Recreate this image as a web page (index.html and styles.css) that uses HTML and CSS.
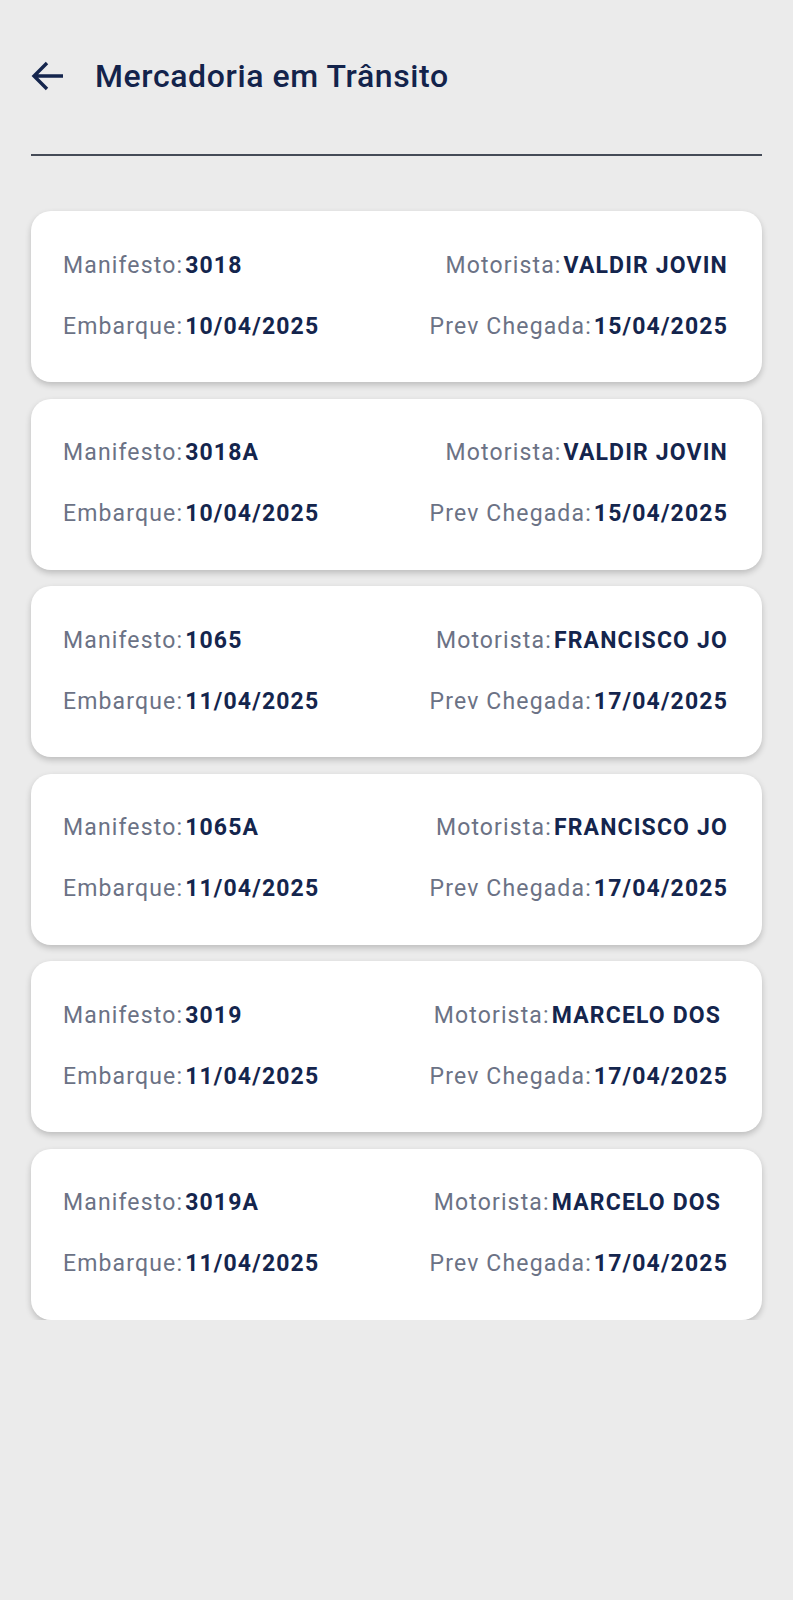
FILE: index.html
```html
<!DOCTYPE html>
<html lang="pt-BR">
<head>
<meta charset="utf-8">
<title>Mercadoria em Trânsito</title>
<link rel="stylesheet" href="styles.css">
</head>
<body>
<div class="app">
  <header class="header">
    <svg class="back" width="32" height="30" viewBox="0 0 32 30" aria-hidden="true">
      <path d="M32 15 H3 M16 2 L3 15 L16 28" fill="none" stroke="#14254d" stroke-width="3.4" stroke-linejoin="miter"/>
    </svg>
    <h1 class="title">Mercadoria em Trânsito</h1>
  </header>
  <div class="divider"></div>
  <main class="list">
    <section class="card">
      <div class="row"><span class="label">Manifesto:</span><span class="value">3018</span></div>
      <div class="row right"><span class="label">Motorista:</span><span class="value">VALDIR JOVIN</span></div>
      <div class="row"><span class="label">Embarque:</span><span class="value">10/04/2025</span></div>
      <div class="row right"><span class="label">Prev Chegada:</span><span class="value">15/04/2025</span></div>
    </section>
    <section class="card">
      <div class="row"><span class="label">Manifesto:</span><span class="value">3018A</span></div>
      <div class="row right"><span class="label">Motorista:</span><span class="value">VALDIR JOVIN</span></div>
      <div class="row"><span class="label">Embarque:</span><span class="value">10/04/2025</span></div>
      <div class="row right"><span class="label">Prev Chegada:</span><span class="value">15/04/2025</span></div>
    </section>
    <section class="card">
      <div class="row"><span class="label">Manifesto:</span><span class="value">1065</span></div>
      <div class="row right"><span class="label">Motorista:</span><span class="value">FRANCISCO JO</span></div>
      <div class="row"><span class="label">Embarque:</span><span class="value">11/04/2025</span></div>
      <div class="row right"><span class="label">Prev Chegada:</span><span class="value">17/04/2025</span></div>
    </section>
    <section class="card">
      <div class="row"><span class="label">Manifesto:</span><span class="value">1065A</span></div>
      <div class="row right"><span class="label">Motorista:</span><span class="value">FRANCISCO JO</span></div>
      <div class="row"><span class="label">Embarque:</span><span class="value">11/04/2025</span></div>
      <div class="row right"><span class="label">Prev Chegada:</span><span class="value">17/04/2025</span></div>
    </section>
    <section class="card">
      <div class="row"><span class="label">Manifesto:</span><span class="value">3019</span></div>
      <div class="row right"><span class="label">Motorista:</span><span class="value">MARCELO DOS&nbsp;</span></div>
      <div class="row"><span class="label">Embarque:</span><span class="value">11/04/2025</span></div>
      <div class="row right"><span class="label">Prev Chegada:</span><span class="value">17/04/2025</span></div>
    </section>
    <section class="card">
      <div class="row"><span class="label">Manifesto:</span><span class="value">3019A</span></div>
      <div class="row right"><span class="label">Motorista:</span><span class="value">MARCELO DOS&nbsp;</span></div>
      <div class="row"><span class="label">Embarque:</span><span class="value">11/04/2025</span></div>
      <div class="row right"><span class="label">Prev Chegada:</span><span class="value">17/04/2025</span></div>
    </section>
  </main>
</div>
</body>
</html>
```

FILE: styles.css
```css
html, body {
  margin: 0;
  padding: 0;
  background: #ebebeb;
}

body {
  font-family: Roboto, "Liberation Sans", sans-serif;
  color: #14254d;
}

.app {
  padding: 0 31px;
}

.header {
  display: flex;
  align-items: center;
  gap: 32px;
  padding-top: 56px;
  height: 40px;
}

.back {
  display: block;
  flex: none;
}

.title {
  margin: 0;
  font-size: 32px;
  font-weight: 500;
  line-height: 40px;
  letter-spacing: 0.6px;
  color: #13234b;
}

.divider {
  margin-top: 58px;
  height: 2px;
  background: #454b57;
}

.list {
  display: flex;
  flex-direction: column;
  gap: 16.5px;
  margin-top: 55px;
}

.card {
  background: #ffffff;
  border-radius: 20px;
  box-shadow: 0 3px 6px rgba(0, 0, 0, 0.2);
  padding: 39.5px 34px 40.5px 32px;
  display: grid;
  grid-template-columns: auto auto;
  justify-content: space-between;
  row-gap: 31px;
}

.row {
  font-size: 23px;
  line-height: 30px;
  letter-spacing: 1.15px;
  white-space: nowrap;
}

.right {
  text-align: right;
}

.label {
  color: #6b7285;
  font-weight: 400;
}

.value {
  margin-left: 2px;
  color: #14254d;
  font-weight: 700;
}
```
